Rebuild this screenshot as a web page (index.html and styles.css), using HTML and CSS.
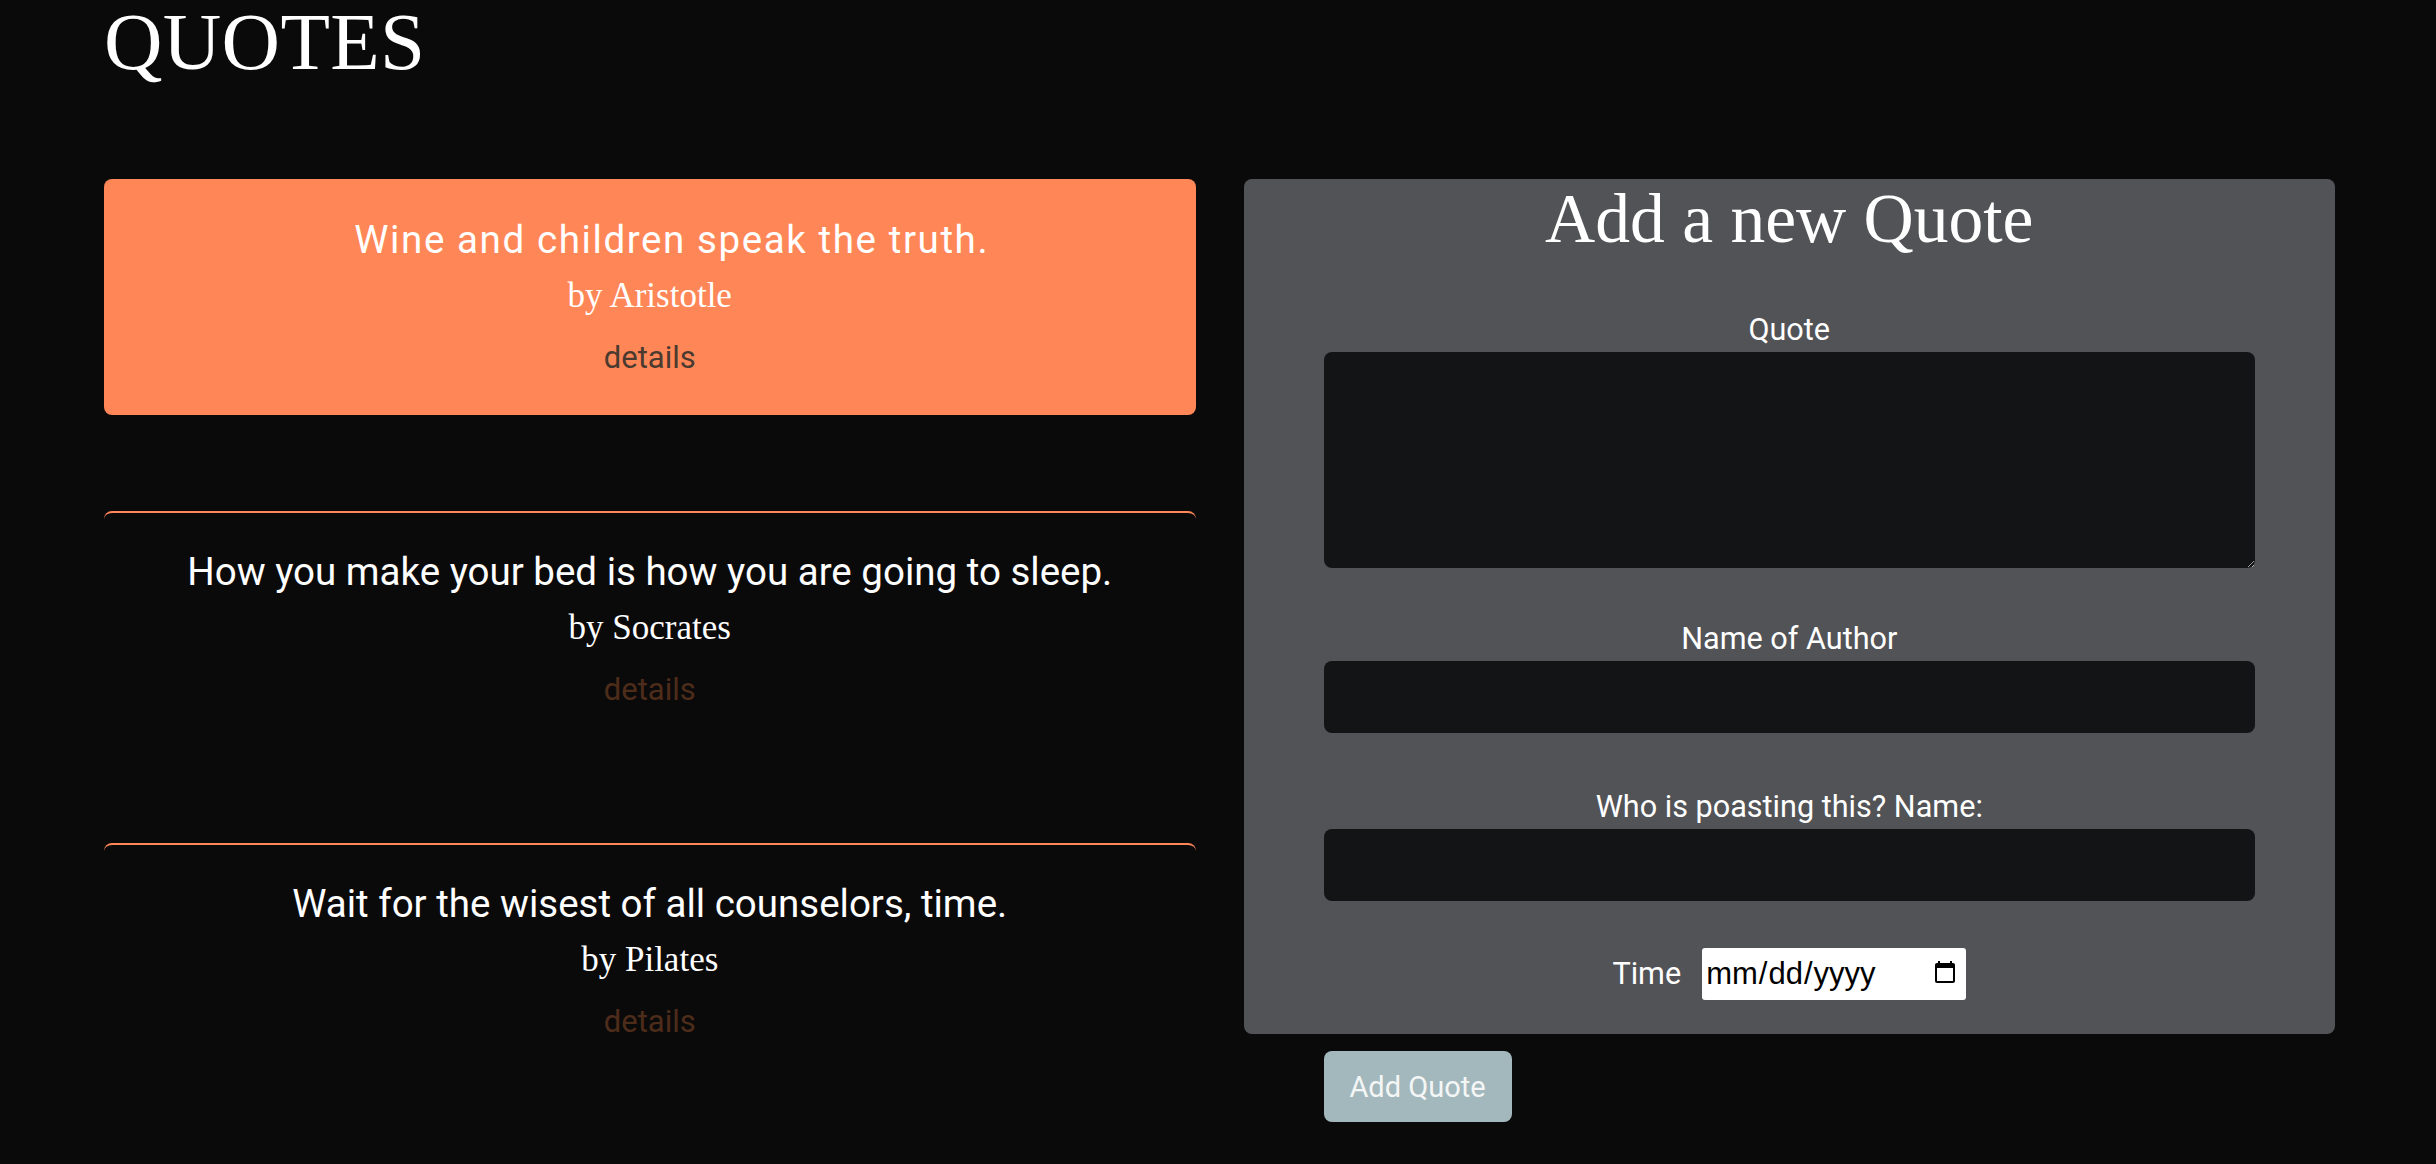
FILE: index.html
```html
<!DOCTYPE html>
<html lang="en">
<head>
<meta charset="utf-8">
<title>Quotes</title>
<link rel="stylesheet" href="styles.css">
</head>
<body>
<main class="page">
  <h1 class="page-title">QUOTES</h1>
  <div class="layout">
    <section class="quote-list">
      <article class="quote-card quote-card--active">
        <p class="quote-text">Wine and children speak the truth.</p>
        <p class="quote-author">by Aristotle</p>
        <a class="quote-details" href="#">details</a>
      </article>
      <article class="quote-card">
        <p class="quote-text">How you make your bed is how you are going to sleep.</p>
        <p class="quote-author">by Socrates</p>
        <a class="quote-details" href="#">details</a>
      </article>
      <article class="quote-card">
        <p class="quote-text">Wait for the wisest of all counselors, time.</p>
        <p class="quote-author">by Pilates</p>
        <a class="quote-details" href="#">details</a>
      </article>
    </section>
    <section class="form-col">
      <form class="quote-form">
        <h2 class="form-title">Add a new Quote</h2>
        <div class="field">
          <label class="field-label" for="q">Quote</label>
          <textarea class="field-area" id="q"></textarea>
        </div>
        <div class="field">
          <label class="field-label" for="a">Name of Author</label>
          <input class="field-input" id="a" type="text">
        </div>
        <div class="field field--last">
          <label class="field-label" for="p">Who is poasting this? Name:</label>
          <input class="field-input" id="p" type="text">
        </div>
        <div class="time-row">
          <label class="field-label" for="t">Time</label>
          <input class="date-input" id="t" type="date">
        </div>
      </form>
      <button class="add-btn" type="button">Add Quote</button>
    </section>
  </div>
</main>
</body>
</html>
```
FILE: styles.css
```css
html, body {
  margin: 0;
  padding: 0;
  background: #0b0a0b;
  color: #ffffff;
  font-family: Roboto, "Liberation Sans", sans-serif;
}

.page {
  padding: 0 101px 40px 104px;
}

.page-title {
  margin: 0;
  padding-top: 1px;
  font-family: "Liberation Serif", serif;
  font-weight: 400;
  font-size: 81px;
  line-height: 82px;
  letter-spacing: 0.3px;
  color: #ffffff;
}

.layout {
  margin-top: 96px;
  display: grid;
  grid-template-columns: 1fr 1fr;
  gap: 48px;
  align-items: start;
}

.quote-list {
  display: flex;
  flex-direction: column;
  gap: 96px;
}

.quote-card {
  height: 236px;
  box-sizing: border-box;
  padding-top: 37px;
  border-top: 2px solid #ff8757;
  border-radius: 8px;
  text-align: center;
}

.quote-card--active {
  background: #ff8757;
  border-top-color: #ff8757;
}

.quote-text {
  margin: 0;
  font-size: 38.5px;
  line-height: 44px;
  color: #ffffff;
}

.quote-card--active .quote-text {
  letter-spacing: 1.6px;
  padding-left: 44px;
}

.quote-author {
  margin: 14px 0 0;
  font-family: "Liberation Serif", serif;
  font-size: 35px;
  line-height: 40px;
  color: #ffffff;
}

.quote-details {
  display: inline-block;
  margin-top: 24px;
  font-size: 31px;
  line-height: 36px;
  color: #4e2c1a;
  text-decoration: none;
}

.quote-card--active .quote-details {
  color: #4a3a30;
}

.form-col {
  display: flex;
  flex-direction: column;
  align-items: flex-start;
}

.quote-form {
  align-self: stretch;
  background: #525357;
  border-radius: 8px;
  padding: 0 80px 34px;
  text-align: center;
}

.form-title {
  margin: 0;
  font-family: "Liberation Serif", serif;
  font-weight: 400;
  font-size: 69.5px;
  line-height: 80px;
  color: #ffffff;
}

.field {
  margin-top: 54px;
  display: flex;
  flex-direction: column;
  gap: 5px;
}

.field--last {
  margin-top: 57px;
}

.field-label {
  font-size: 30.6px;
  line-height: 34px;
  color: #ffffff;
}

.field-area,
.field-input {
  box-sizing: border-box;
  width: 100%;
  background: #131416;
  border: none;
  border-radius: 8px;
  color: #ffffff;
  font-family: inherit;
  font-size: 26px;
}

.field-area {
  height: 216px;
  resize: vertical;
}

.field-input {
  height: 72px;
}

.time-row {
  margin-top: 47px;
  display: flex;
  justify-content: center;
  align-items: center;
  gap: 21px;
}

.date-input {
  box-sizing: border-box;
  width: 264px;
  height: 52px;
  padding: 0 8px 0 3px;
  border: none;
  border-radius: 3px;
  background: #ffffff;
  color: #000000;
  font-family: "Liberation Sans", Arial, sans-serif;
  font-size: 31px;
}

.date-input::-webkit-calendar-picker-indicator {
  width: 26px;
  height: 28px;
  padding: 0;
  margin: 0;
}

.add-btn {
  margin: 17px 0 0 80px;
  width: 188px;
  height: 71px;
  border: none;
  border-radius: 8px;
  background: #a3b8bc;
  color: #f4f6f6;
  font-family: inherit;
  font-size: 29px;
  padding: 0;
}
```
